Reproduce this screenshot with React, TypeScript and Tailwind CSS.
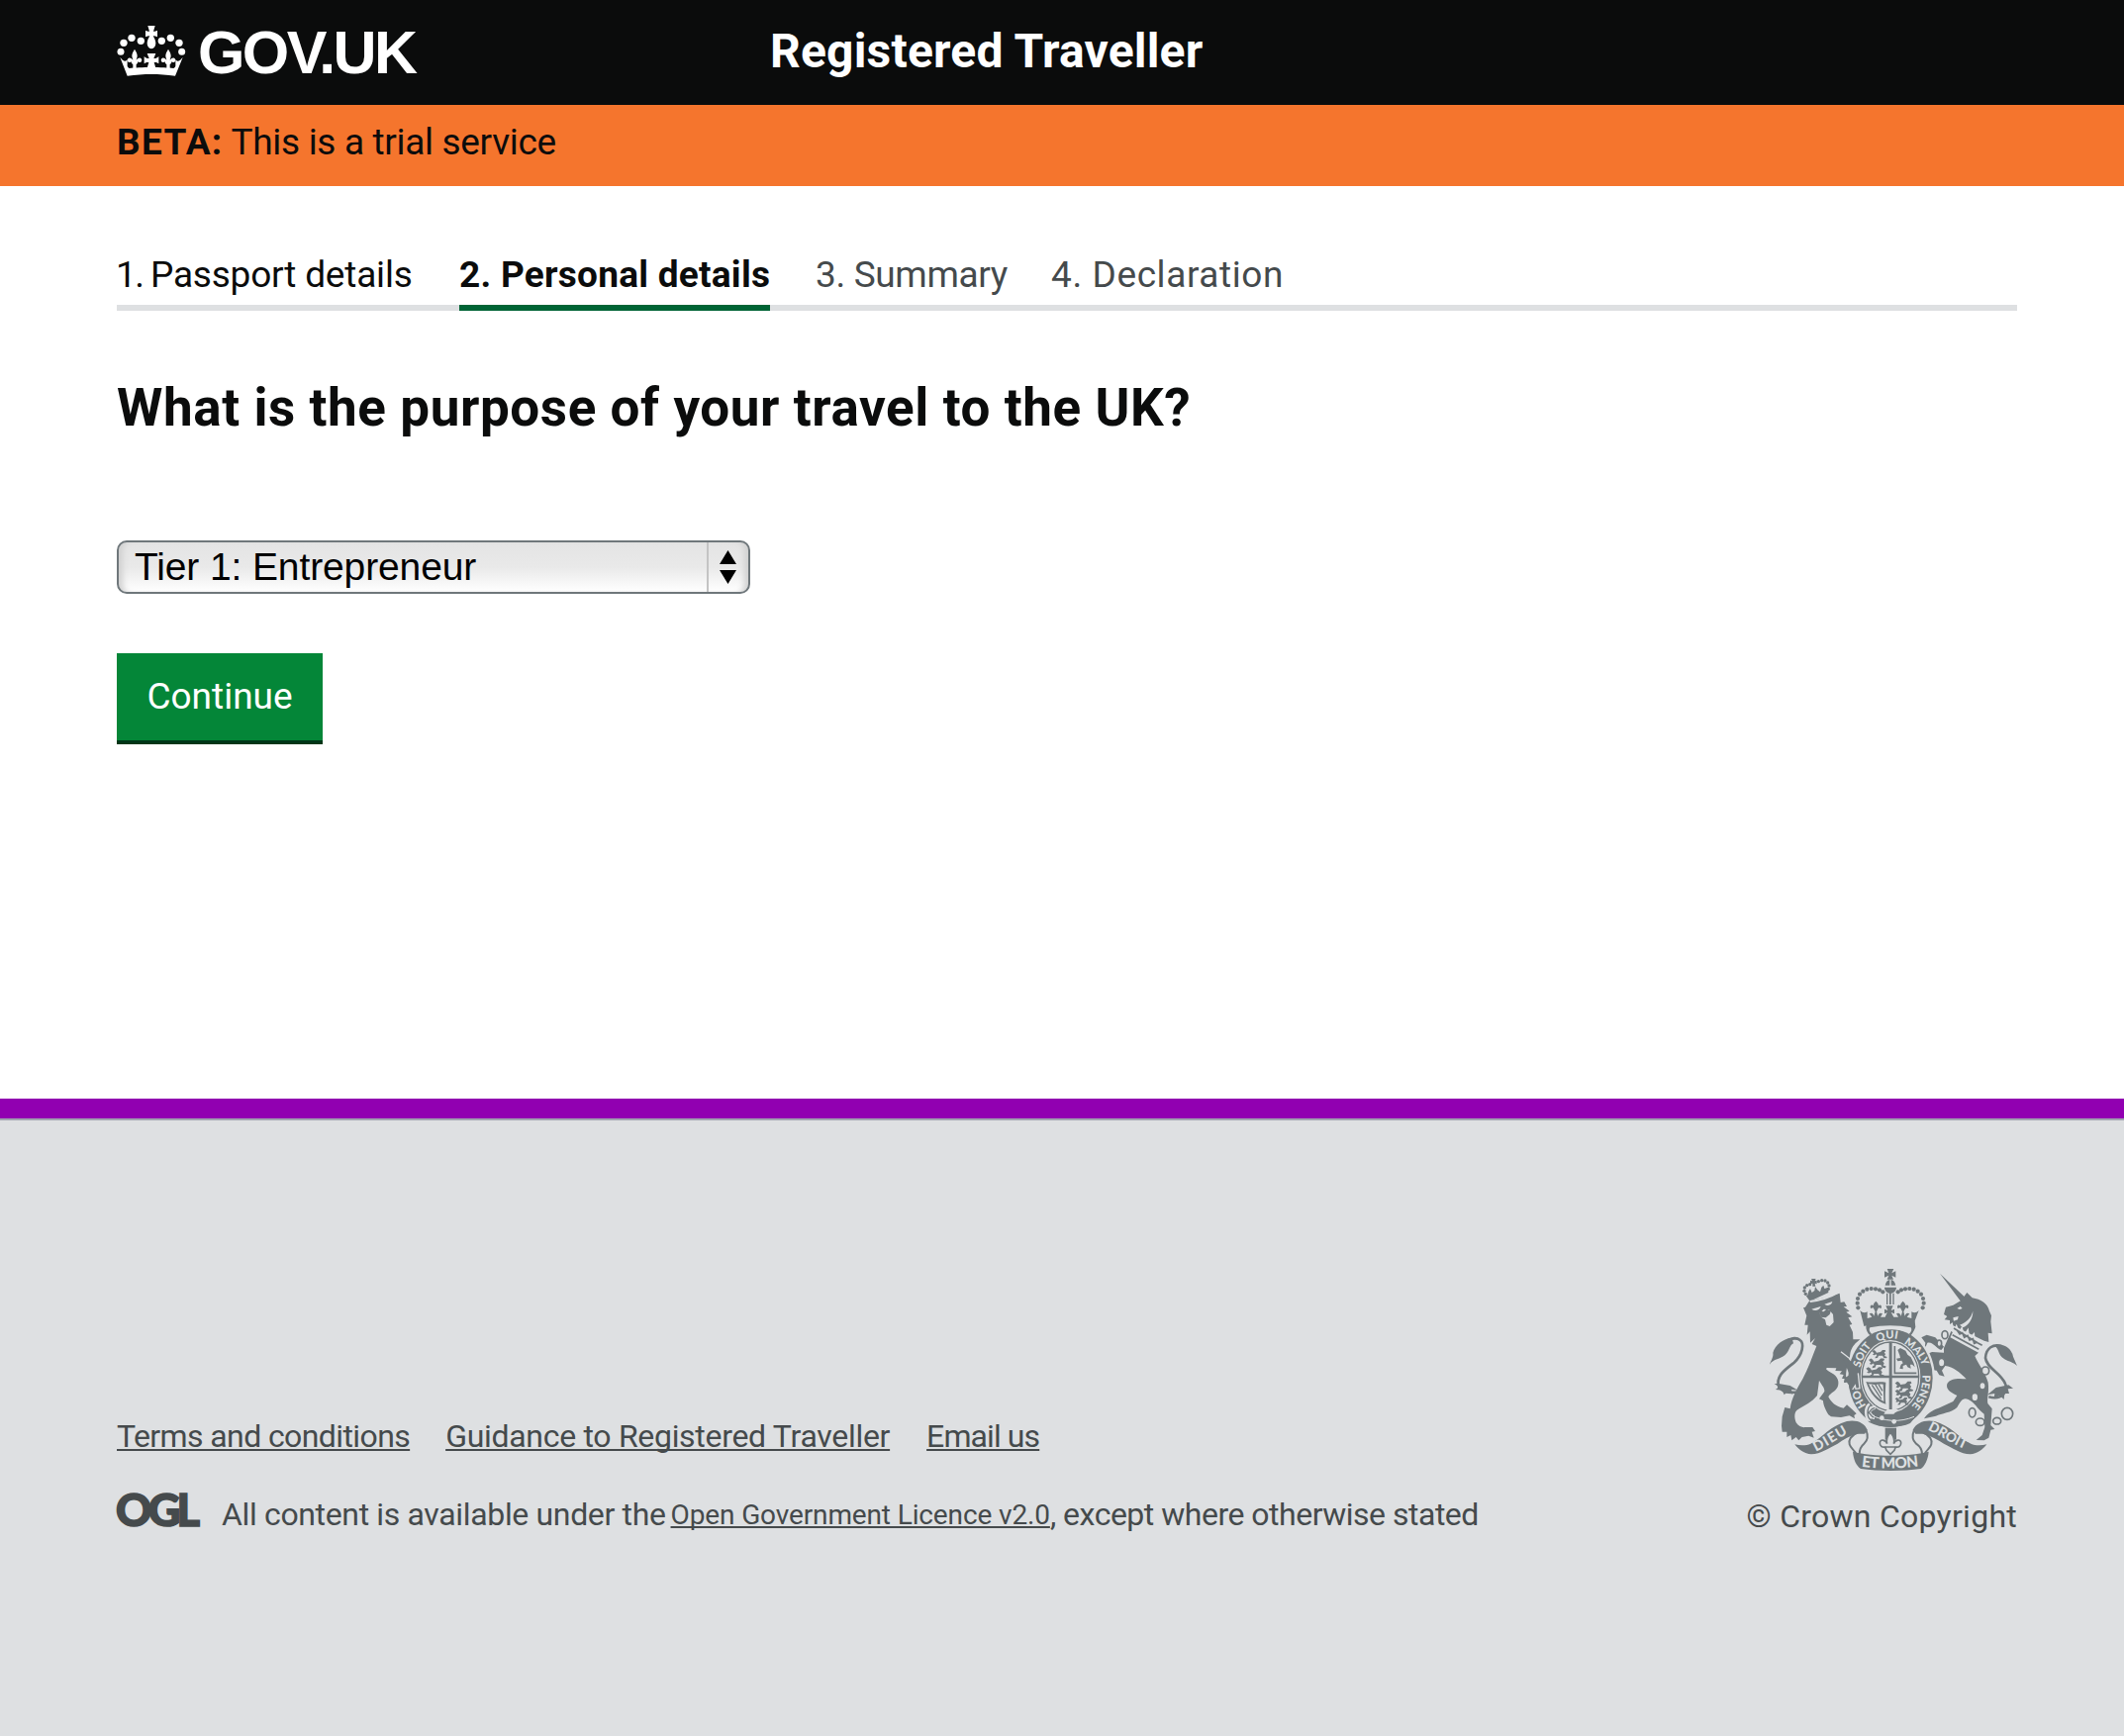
import type { ReactNode } from "react";

const INK = "#6f777b";
const PAPER = "#dee0e2";

const HEADER_PEARLS: [number, number, number][] = [
  [66, 157, 10.5], [75, 130, 11], [99, 115, 11], [127, 124, 11],
  [190, 124, 11], [217, 115, 11], [243, 130, 11], [251, 157, 10.5],
];

function FleurPair({ x }: { x: number }) {
  return (
    <g transform={`translate(${x} 0)`}>
      <path d="M0 149c5 8 8 14 8 20 0 5-2 9-3 13 5-6 9-8 13-6 5 2 5 9 1 12-3 2-7 1-9-1 0 4-2 7-5 8v16h-10v-16c-3-1-5-4-5-8-2 2-6 3-9 1-4-3-4-10 1-12 4-2 8 0 13 6-1-4-3-8-3-13 0-6 3-12 8-20z" />
    </g>
  );
}

function HeaderCrown() {
  return (
    <svg viewBox="54 72 210 186" className="h-[62px] w-[70px] shrink-0" fill="#fff">
      {HEADER_PEARLS.map(([x, y, r]) => <circle key={x} cx={x} cy={y} r={r} />)}
      <path d="M148 78h22l-5 17c5 0 8-1 12-3v20c-4-2-8-3-13-3 4 7 8 14 8 22 0 9-5 16-13 17-8-1-13-8-13-17 0-8 4-15 8-22-5 0-9 1-13 3V92c4 2 7 3 12 3z" />
      <path d="M64 174c5 6 9 10 14 11 3 1 5-1 8-4v14c-1 6 1 10 6 12 30-4 104-4 134 0 5-2 7-6 6-12v-14c3 3 5 5 8 4 5-1 9-5 14-11l-23 56c-50-7-94-7-145 0z" />
      <path d="M146 162h26l-6 15c6 1 9-1 15-6v22c-5-4-9-5-14-4l6 20h-28l6-20c-5-1-9 0-14 4v-22c6 5 9 7 15 6z" />
      <FleurPair x={108} />
      <FleurPair x={210} />
    </svg>
  );
}

const CREST_PEARLS: [number, number][] = [
  [352, 154], [350, 140], [351, 126], [357, 113], [367, 104], [379, 98], [392, 96], [405, 97], [417, 100], [427, 106],
  [548, 154], [551, 140], [549, 126], [543, 113], [533, 104], [521, 98], [508, 96], [495, 97], [483, 100], [473, 106],
];
const LION_PEARLS: [number, number][] = [
  [193, 112], [189, 103], [190, 93], [197, 86], [206, 83],
  [262, 97], [264, 87], [260, 78], [252, 72], [242, 71], [232, 74],
];
const CHAIN: [number, number, number, number][] = [
  [615, 236, 9, 12], [598, 262, 7, 10], [605, 320, 10, 13], [738, 345, 11, 12],
  [698, 472, 10, 14], [722, 500, 13, 11], [773, 497, 12, 10], [804, 475, 17, 18],
];

function Passant({ x, y, s = 1 }: { x: number; y: number; s?: number }) {
  return (
    <path
      transform={`translate(${x} ${y}) scale(${s})`}
      d="M0 2l6-4 5 3 3 5 12-2 6-6 8 0 2 4-5 3 4 6-3 5 8 3-2 4-8-1-4-7-12 0-3 7-8 1 2-5 4-2-2-5-6 3-5-2 4-4z"
    />
  );
}

function RoyalArms() {
  return (
    <svg viewBox="84 36 750 612" className="h-[204px] w-[250px] overflow-visible" fill={INK} stroke="none">
      <defs>
        <path id="garter-soit" d="M358 340A97 118 0 0 1 406 260" />
        <path id="garter-qui" d="M408 260A97 118 0 0 1 490 256" />
        <path id="garter-mal" d="M488 262A103 120 0 0 1 551 350" />
        <path id="garter-pense" d="M547 356A98 118 0 0 1 494 468" />
        <path id="garter-hon" d="M384 460A97 118 0 0 1 353 370" />
        <path id="motto-left" d="M224 590C262 572 290 552 330 530" />
        <path id="motto-mid" d="M362 635Q450 647 544 633" />
        <path id="motto-right" d="M562 524C606 544 640 570 694 590" />
      </defs>

      {/* lion */}
      <path d="M205 132C235 128 265 120 296 110L299 138 310 136 318 150 308 151 326 164 316 167 334 181 322 184 334 204 326 206 336 228 337 250 358 250 344 262C332 275 326 290 328 306L344 330 352 352 356 398 345 398 342 386 336 398 328 385 320 394 318 380 309 380 312 370 303 368 308 357 296 355 303 346 283 345 286 337 258 336C250 340 262 345 272 352 290 362 296 378 290 394 284 408 268 412 262 424 270 440 284 454 308 458L318 448 334 462 347 475 340 480 342 490 326 481 300 486 270 484 262 478C252 462 246 446 246 436L234 430 250 408C252 396 238 384 234 374L228 420C212 440 190 450 170 462 158 468 158 486 164 502 172 514 184 518 192 516L214 516 222 528 212 530 218 548 202 542 182 546 172 556 164 546 151 556 148 540 136 546 136 530 122 530 120 512 122 484 130 456 146 460C150 430 166 400 184 370 200 340 212 306 226 270L212 264 222 246 207 260 206 226 197 236 200 206 190 206 196 178 186 154 192 152z" />
      <path d="M172 410C150 410 128 416 112 394 100 360 134 340 158 320 184 296 190 262 176 252 164 242 150 248 138 252" fill="none" stroke={INK} strokeWidth="8" />
      <path d="M152 246C126 246 100 268 94 290 96 304 88 312 84 326 96 308 116 310 130 298 146 284 142 270 156 262zM112 384l-14 0 14 10-10 8 20 2 6 14 10-10 16 8-4-14 20 2-24-14z" />
      {LION_PEARLS.map(([x, y]) => <circle key={`${x}-${y}`} cx={x} cy={y} r="5" />)}
      <path d="M210 66h14l-3 7 6-2v11l-6-2 2 9h-9l0-9-7 2V71l6 2zM190 112l8 6 4-14 5-8 5 12 8-6 2-12 7 10 8 6 4-14 6-6 3 10 12-4v16l-56 26z" />
      <g fill={PAPER}>
        <path d="M211 158l28-8c-4 12-18 15-28 8zM250 143l24-8c-1 10-13 16-24 8zM236 170l12-12 16 2 12 14 2 24-12 12-10-4-4-16-12-8z" />
        <path d="M205 132q46-6 88-28l4 4q-40 24-90 30z" />
      </g>
      <path d="M236 164l12 2 8-8 14 4-4 12-12 10-16-2z" />

      {/* unicorn */}
      <path d="M600 50L680 126 664 136z" />
      <path d="M682 108L698 124C724 128 744 140 750 164L756 178 754 196 758 232 746 230 748 258 734 254 640 208 638 196 654 190 656 180 640 184 642 196 630 204 630 192 614 190 622 180 612 174 618 152 640 146 664 132z" />
      <path d="M634 225L722 286 706 300C714 322 738 350 746 380 750 410 742 424 745 444L758 460 754 510 766 522 754 524 748 548 734 556 710 555 728 540 736 516 734 476C712 460 706 440 686 432 668 424 662 440 652 456 636 472 604 474 588 482L552 490C560 476 578 464 596 458L640 438 652 420C626 408 618 398 622 384 632 366 660 368 680 370 660 350 640 332 616 330L606 344 614 362 598 358 590 344 574 342 580 326 558 318 552 298 576 288 612 290 612 276z" />
      <path d="M604 282C586 276 580 256 562 260L552 284 556 260 544 244 560 236 586 244 612 272z" />
      <path d="M650 212l8 20 8-14 6 24 12-18 4 26 14-14 2 24 12-8 8 10 14 2-18 24-84-46z" stroke={PAPER} strokeWidth="7" fill={PAPER} />
      <path d="M642 216l72 44 14 8M638 236l80 44M652 222l8 12 8-4 6 14 10-6 6 14 10-4 4 14 10-4" fill="none" stroke={INK} strokeWidth="5" />
      <path d="M652 156l10-6 6 6-8 3zM660 206c20-8 34-20 40-42 0 24-12 42-30 50z" fill={PAPER} />
      <path d="M748 424C790 436 808 404 798 384 784 350 742 338 738 306 740 274 762 264 786 270" fill="none" stroke={INK} strokeWidth="8" />
      <path d="M764 268C790 258 818 276 822 302L834 330C820 316 802 318 788 304 776 292 780 280 764 268zM808 388l14 10-16 2 4 14-14 0-2 18-12-12-18 8 2-14-22 4 26-22z" />
      {CHAIN.map(([x, y, rx, ry]) => (
        <ellipse key={`${x}-${y}`} cx={x} cy={y} rx={rx} ry={ry} fill={PAPER} stroke={INK} strokeWidth="5" />
      ))}
      <ellipse cx="729" cy="391" rx="7" ry="9" fill={PAPER} />
      <ellipse cx="706" cy="425" rx="8" ry="10" fill={PAPER} />

      {/* garter and shield */}
      <ellipse cx="450" cy="367" rx="135" ry="156" fill={PAPER} />
      <ellipse cx="450" cy="367" rx="128" ry="149" />
      <ellipse cx="450" cy="362" rx="91" ry="110" fill={PAPER} />
      <ellipse cx="450" cy="362" rx="86" ry="104" fill="none" stroke={INK} strokeWidth="4" />
      <path d="M446 258h9v206h-9zM364 359h172v8H364z" />
      <Passant x={394} y={284} />
      <Passant x={384} y={310} s={1.15} />
      <Passant x={376} y={336} s={1.2} />
      <Passant x={464} y={380} s={1.2} />
      <Passant x={464} y={404} s={1.15} />
      <Passant x={464} y={428} s={0.9} />
      <path d="M463 270v82h66" fill="none" stroke={INK} strokeWidth="5" />
      <path d="M472 282l8-6 16 8 6 12 10 8 8 16 4 14-8-8-6 0 2 12-10-4-4-8-10 4 0 10-10-2 4-12 6-4-4-8-12 2-4-8 12-2-2-8z" />
      <path d="M376 378c20 4 38-2 60 2-2 34-2 48 0 66-26-6-48-32-60-68zm8 6c10 26 26 44 46 54l-2-52c-16-2-26 4-44-2z" fillRule="evenodd" />
      <path d="M394 388l28 42M404 386l20 34M414 386l12 20" stroke={INK} strokeWidth="4" />
      <path d="M440 462h34l-14 14h-30z" fill={PAPER} />
      <path d="M372 470C420 500 480 502 528 482L510 504C476 520 420 520 384 500z" />
      <path d="M384 476C430 500 480 502 522 484" fill="none" stroke={PAPER} strokeWidth="3" />
      <g fill={PAPER}>
        <circle cx="424" cy="488" r="7" />
        <circle cx="461" cy="499" r="7" />
      </g>
      <g fill={PAPER} className="font-['Lato'] font-black" fontSize="33">
        <text><textPath href="#garter-hon" startOffset="12">HO</textPath></text>
        <text><textPath href="#garter-soit" startOffset="4">SOIT</textPath></text>
        <text><textPath href="#garter-qui" startOffset="4">QUI</textPath></text>
        <text><textPath href="#garter-mal" startOffset="2">MALY</textPath></text>
        <text><textPath href="#garter-pense" startOffset="2">PENSE</textPath></text>
      </g>
      <path d="M388 448c-14 8-14 40 2 46M404 456c-14 0-14 8-22 14 8 4 6 16 20 16" fill="none" stroke={PAPER} strokeWidth="12" />
      <path d="M390 450c-12 8-12 36 0 44M402 458c-10 0-12 8-18 14 8 4 6 12 16 14" fill="none" stroke={INK} strokeWidth="4" />
      <path d="M298 284L344 330 352 352 356 396 344 398 330 396 318 380 309 380 312 366 326 358z" />
      <path d="M300 287l28 22M352 352l5 46-12 2-2-10-8 12" stroke={PAPER} strokeWidth="4" fill="none" />

      {/* crown */}
      <path d="M380 208c0 10 6 16 10 24 40-16 84-16 122 0 6-8 10-14 10-24-44-10-98-10-142 0z" fill={PAPER} />
      <path d="M378 194c44-12 100-12 146 0l2 18c-2 8-8 18-14 26l-6-4c8-6 10-14 6-20-40-8-86-8-124 0-4 6-2 14 6 20l-6 4c-8-8-12-18-12-26z" />
      {CREST_PEARLS.map(([x, y]) => <circle key={`${x}-${y}`} cx={x} cy={y} r="6.3" />)}
      <path d="M358 162c8 8 14 8 22 4l0 20 14-4-8-10c8-6 14 2 14 8l4-14-6-12-8 2c-4-12 6-12 8-8 0-6 4-10 8-14 4 4 8 8 8 14 2-4 12-4 8 8l-8-2-6 12 4 14c0-6 6-14 14-8l-6 10 14 0c4-8 6-14 8-14l-10 4v-14l10 4-6-14h22l-6 14 10-4v14l-10-4 8 14 14 0-6-10c8-6 14 2 14 8l4-14-6-12-8 2c-4-12 6-12 8-8 0-6 4-10 8-14 4 4 8 8 8 14 2-4 12-4 8 8l-8-2-6 12 4 14c0-6 6-14 14-8l-8 10 14 4v-20c8 4 14 4 22-4l-18 48c-48-16-98-16-148 0z" />
      <path d="M438 110h4v34h-4zM447 110h5v34h-5zM457 110h4v34h-4zM432 92h36c0 10-8 18-18 18s-18-8-18-18zM434 86q4-16 14-17v17zM466 86q-4-16-14-17v17z" />
      <path d="M440 36h20l-6 13 12-6v19l-12-6 5 12h-19l5-12-13 6V43l13 6z" />

      {/* ribbons */}
      <path d="M160 568C176 572 196 572 208 566 244 548 270 510 318 498 346 492 372 502 380 524L372 536 350 536C326 542 306 554 290 566 262 580 240 596 210 598 190 598 170 582 160 568z" />
      <path d="M742 568C726 572 706 572 694 566 658 548 630 510 584 498 556 492 528 502 518 524L526 536 548 536C572 542 594 554 612 566 640 580 662 596 692 598 712 598 732 582 742 568z" />
      <path d="M336 590C400 606 500 606 566 590 564 614 554 634 542 642 490 650 412 650 360 642 346 632 338 614 336 590z" />
      <path d="M352 532C330 540 322 556 326 568 330 582 342 584 346 598M376 524C384 544 382 556 370 566 360 574 356 582 356 598M548 532C570 540 578 556 574 568 570 582 558 584 554 598M522 524C514 544 516 556 528 566 540 574 546 582 546 598" fill="none" stroke={INK} strokeWidth="6" />
      <path d="M434 518h34v36h-34z" />
      <g fill={PAPER} stroke={INK} strokeWidth="5">
        <path d="M450 532c10 12 14 22 10 34 4-12 22-16 22-2 0 10-8 14-16 12l-4 10-12 12-12-12-4-10c-8 2-16-2-16-12 0-14 18-10 22 2-4-12 0-22 10-34zM432 576h36" />
      </g>
      <g fill={PAPER} className="font-['Lato'] font-black" fontSize="42">
        <text><textPath href="#motto-left" textLength="112">DIEU</textPath></text>
        <text fontSize="46"><textPath href="#motto-mid" textLength="174">ET MON</textPath></text>
        <text fontSize="41"><textPath href="#motto-right">DROIT</textPath></text>
      </g>
    </svg>
  );
}

function Arrow({ down = false }: { down?: boolean }) {
  return (
    <svg viewBox="0 0 17 14" className={down ? "h-[14px] w-[17px] rotate-180" : "h-[14px] w-[17px]"}>
      <path d="M8.5 0L17 14H0z" />
    </svg>
  );
}

function FooterLink({ className, children }: { className: string; children: ReactNode }) {
  return (
    <a href="#" className={`underline decoration-2 underline-offset-[2px] [text-decoration-skip-ink:none] ${className}`}>
      {children}
    </a>
  );
}

export default function App() {
  return (
    <div className="flex h-[1754px] w-[2146px] flex-col overflow-hidden bg-white font-['Roboto',sans-serif] whitespace-nowrap text-[#0b0c0c]">
      <header className="flex h-[106px] bg-[#0b0c0c] pl-[118px] text-white">
        <div className="flex w-[660px] items-start">
          <div className="pt-6"><HeaderCrown /></div>
          <span className="ml-3 font-['Liberation_Sans',sans-serif] text-[61px] leading-[106px] font-bold tracking-[-2.6px]">GOV.UK</span>
        </div>
        <span className="text-[48px] leading-[104px] font-bold tracking-[0.2px]">Registered Traveller</span>
      </header>

      <div className="h-[82px] bg-[#f5752d] pl-[118px] text-[37px] leading-[75px]">
        <b className="mr-[8px] font-bold tracking-[1.3px]">BETA:</b>
        <span className="tracking-[-0.33px]">This is a trial service</span>
      </div>

      <main className="flex h-[922px] flex-col items-start px-[118px] pt-[68px]">
        <ol className="flex h-[58px] w-[1920px] border-b-[6px] border-[#dee0e2] text-[37px] leading-[44px]">
          <li className="mr-[46px] w-[300px] tracking-[-0.2px]"><span className="-ml-px tracking-[-1.6px]">1. </span>Passport details</li>
          <li className="mr-[46px] h-[58px] w-[314px] border-b-[6px] border-[#006435] font-bold tracking-[0.25px]">2. Personal details</li>
          <li className="mr-11 w-[194px] tracking-[-0.35px] text-[#454a4c]">3. Summary</li>
          <li className="tracking-[0.6px] text-[#454a4c]">4. Declaration</li>
        </ol>

        <h1 className="mt-[66px] text-[53px] leading-[64px] font-bold tracking-[0.58px]">What is the purpose of your travel to the UK?</h1>

        <div className="mt-[102px] flex h-[54px] w-[640px] rounded-[10px] border-2 border-[#6f777b] bg-linear-to-b from-[#e4e4e4] via-[#e9e9e9] to-white shadow-[inset_8px_0_6px_-4px_#d0d0d0,inset_-8px_0_6px_-4px_#d0d0d0]">
          <span className="w-[594px] pl-4 font-['Liberation_Sans',sans-serif] text-[39px] leading-[49px] tracking-[-0.12px] text-black">Tier 1: Entrepreneur</span>
          <span className="flex flex-1 flex-col items-center gap-[6px] border-l-2 border-[#c4c4c4] pt-2 pr-px">
            <Arrow />
            <Arrow down />
          </span>
        </div>

        <button className="mt-[60px] h-[92px] w-[208px] border-b-4 border-[#003618] bg-[#048638] text-[37px] leading-[88px] text-white">Continue</button>
      </main>

      <footer className="flex flex-1 items-end justify-between border-t-[20px] border-[#9100b1] bg-[#dee0e2] pr-[108px] pb-[202px] pl-[118px] text-[32px] leading-10 text-[#454a4c] shadow-[inset_0_2px_0_#a1a3b0]">
        <div>
          <div className="mb-[39px] flex">
            <FooterLink className="mr-[36px] tracking-[-0.6px]">Terms and conditions</FooterLink>
            <FooterLink className="mr-[37px] tracking-[-0.3px]">Guidance to Registered Traveller</FooterLink>
            <FooterLink className="tracking-[-0.9px]">Email us</FooterLink>
          </div>
          <div className="flex">
            <svg viewBox="0 0 86 40" className="mr-5 h-10 w-[86px] overflow-visible">
              <text x="-1" y="31.5" fontSize="45" letterSpacing="-3.8" fill="#454a4c" stroke="#454a4c" strokeWidth="1.6" className="font-['Lato'] font-black">OGL</text>
            </svg>
            <span className="mr-[5px] tracking-[-0.35px]">All content is available under the</span>
            <FooterLink className="text-[28px] leading-[42px] tracking-[-0.13px]">Open Government Licence v2.0</FooterLink>
            <span className="tracking-[-0.5px]">, except where otherwise stated</span>
          </div>
        </div>
        <div className="flex flex-col items-end">
          <RoyalArms />
          <span className="mt-[26px] tracking-[0.26px]">© Crown Copyright</span>
        </div>
      </footer>
    </div>
  );
}
